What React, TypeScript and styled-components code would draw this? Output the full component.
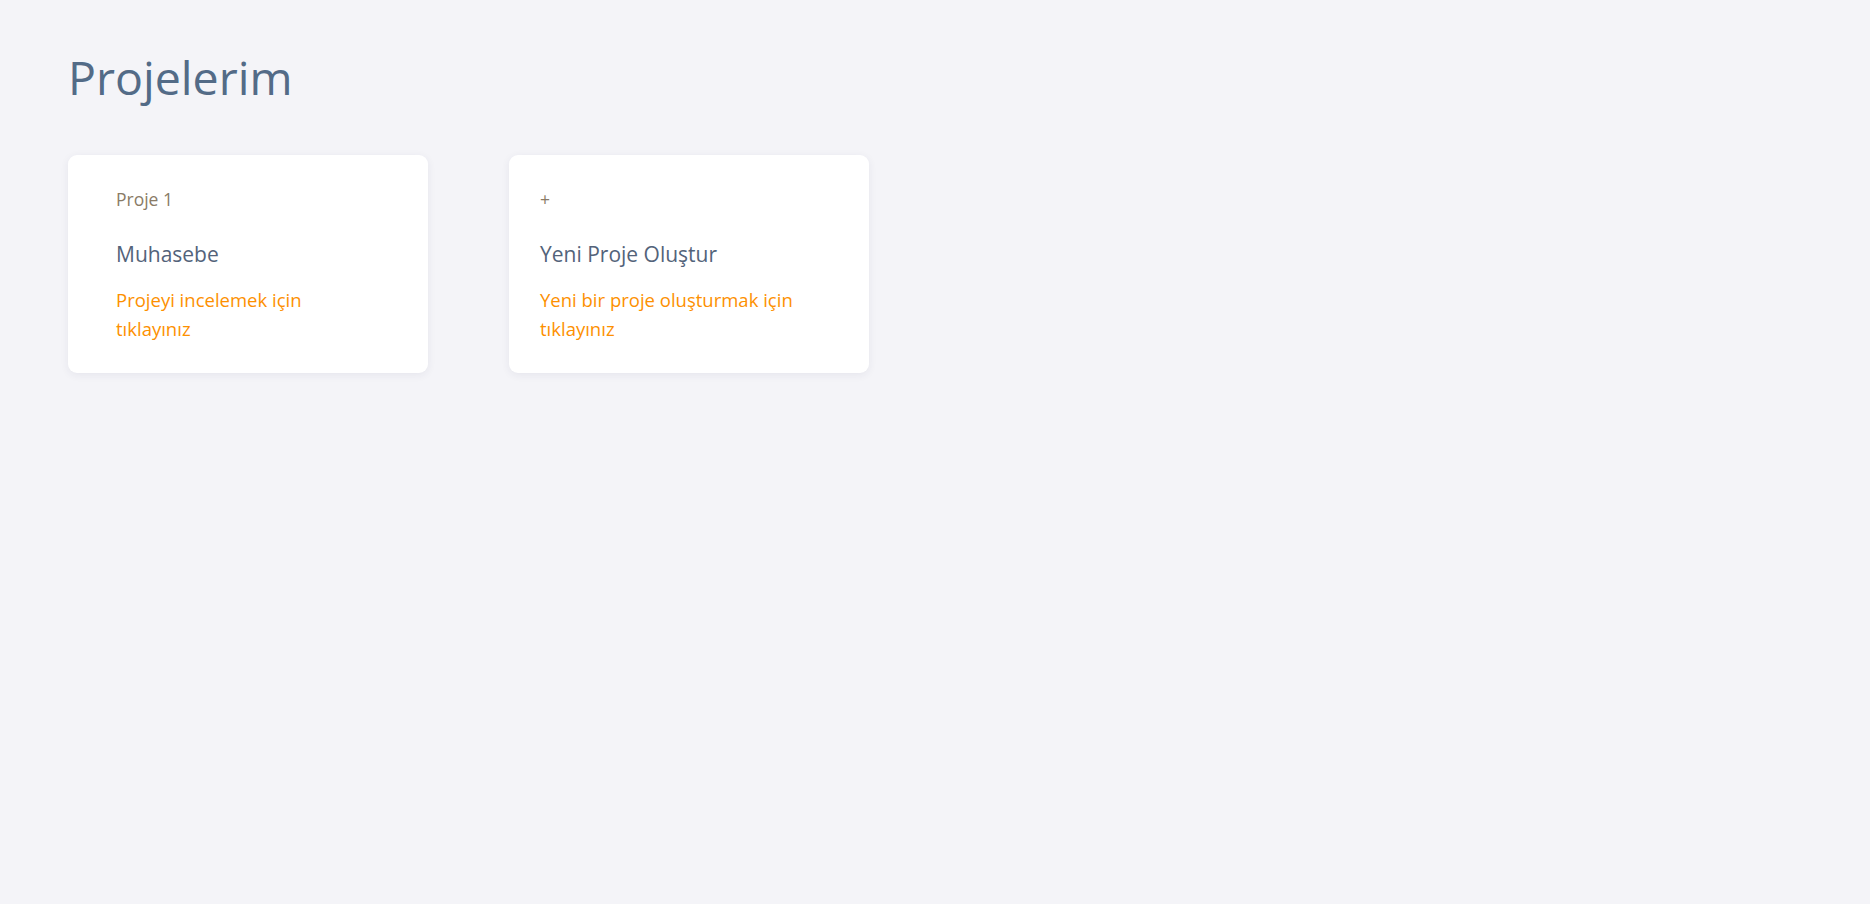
import React from "react";
import styled, { createGlobalStyle } from "styled-components";

const GlobalStyle = createGlobalStyle`
  html, body {
    margin: 0;
    padding: 0;
    background: #f4f4f8;
    font-family: "Open Sans", "Noto Sans", sans-serif;
  }
  #root {
    min-height: 904px;
    background: #f4f4f8;
  }
`;

const Page = styled.main`
  padding: 49px 68px;
`;

const Title = styled.h1`
  margin: 0 0 49px 0;
  font-size: 46.5px;
  line-height: 57px;
  font-weight: 400;
  color: #536b87;
`;

const CardGrid = styled.div`
  display: flex;
  gap: 81px;
  align-items: flex-start;
`;

const Card = styled.div<{ $inset: number }>`
  width: 360px;
  box-sizing: border-box;
  padding: 31px ${(p) => p.$inset}px 30px ${(p) => p.$inset}px;
  background: #ffffff;
  border-radius: 9px;
  box-shadow: 0 2px 8px rgba(40, 40, 80, 0.07);
  cursor: pointer;
  display: flex;
  flex-direction: column;
`;

const Label = styled.div`
  font-size: 17.5px;
  line-height: 27px;
  color: #8a7b66;
`;

const CardTitle = styled.div`
  margin-top: 26px;
  font-size: 21px;
  line-height: 30px;
  color: #53637a;
`;

const Desc = styled.div<{ $max: number }>`
  margin-top: 17px;
  max-width: ${(p) => p.$max}px;
  font-size: 18.5px;
  line-height: 28.5px;
  color: #fd9000;
`;

export default function App() {
  return (
    <>
      <GlobalStyle />
      <Page>
        <Title>Projelerim</Title>
        <CardGrid>
          <Card $inset={48}>
            <Label>Proje 1</Label>
            <CardTitle>Muhasebe</CardTitle>
            <Desc $max={235}>Projeyi incelemek için tıklayınız</Desc>
          </Card>
          <Card $inset={31}>
            <Label>+</Label>
            <CardTitle>Yeni Proje Oluştur</CardTitle>
            <Desc $max={295}>Yeni bir proje oluşturmak için tıklayınız</Desc>
          </Card>
        </CardGrid>
      </Page>
    </>
  );
}
